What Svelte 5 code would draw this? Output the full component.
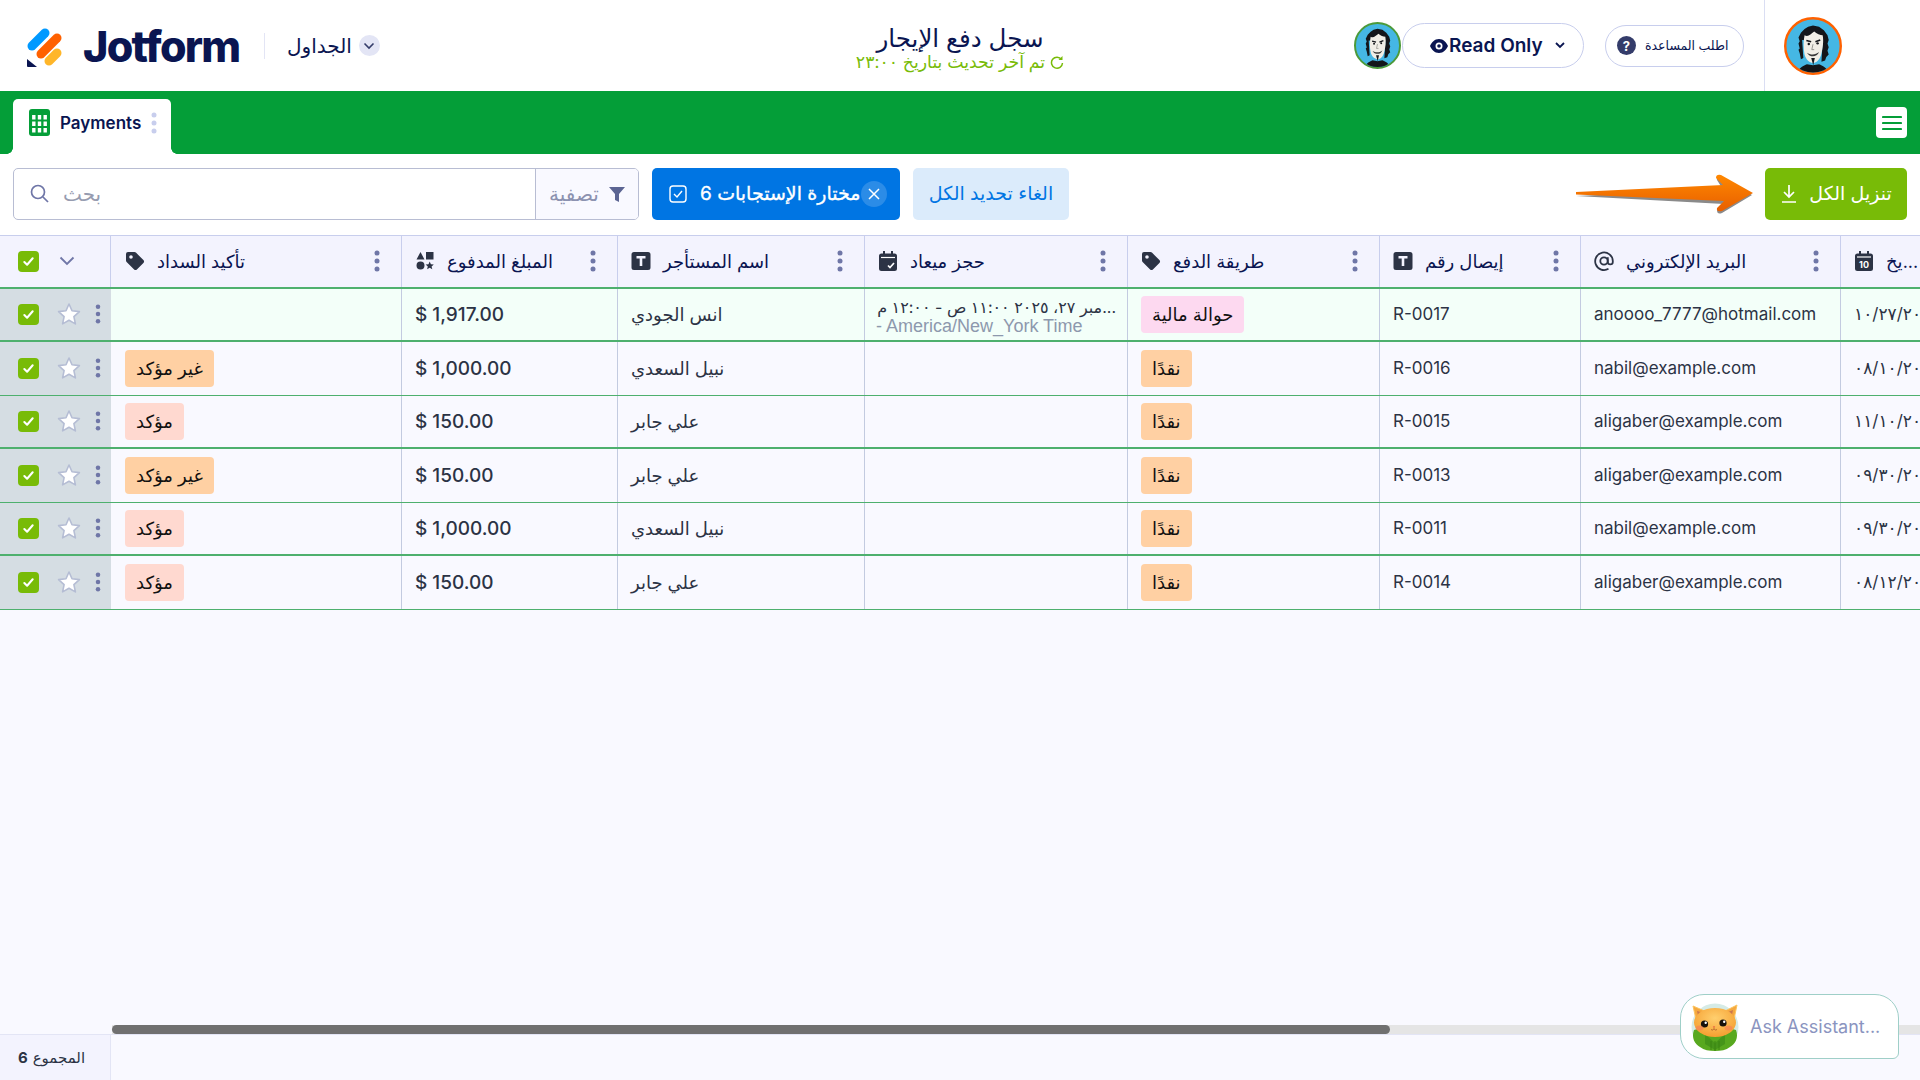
<script>
  const columns = [
    { label: "تأكيد السداد", icon: "tag" },
    { label: "المبلغ المدفوع", icon: "shapes" },
    { label: "اسم المستأجر", icon: "text" },
    { label: "حجز ميعاد", icon: "cal" },
    { label: "طريقة الدفع", icon: "tag" },
    { label: "إيصال رقم", icon: "text" },
    { label: "البريد الإلكتروني", icon: "at" },
    { label: "...يخ", icon: "date" }
  ]

  const rows = [
    { confirm: "", amount: "$ 1,917.00", name: "انس الجودي", slot: true, method: "حوالة مالية", receipt: "R-0017", email: "anoooo_7777@hotmail.com", date: "١٠/٢٧/٢٠٢٥" },
    { confirm: "غير مؤكد", amount: "$ 1,000.00", name: "نبيل السعدي", method: "نقدًا", receipt: "R-0016", email: "nabil@example.com", date: "٠٨/١٠/٢٠٢٥" },
    { confirm: "مؤكد", amount: "$ 150.00", name: "علي جابر", method: "نقدًا", receipt: "R-0015", email: "aligaber@example.com", date: "١١/١٠/٢٠٢٠" },
    { confirm: "غير مؤكد", amount: "$ 150.00", name: "علي جابر", method: "نقدًا", receipt: "R-0013", email: "aligaber@example.com", date: "٠٩/٣٠/٢٠٢٥" },
    { confirm: "مؤكد", amount: "$ 1,000.00", name: "نبيل السعدي", method: "نقدًا", receipt: "R-0011", email: "nabil@example.com", date: "٠٩/٣٠/٢٠٢٥" },
    { confirm: "مؤكد", amount: "$ 150.00", name: "علي جابر", method: "نقدًا", receipt: "R-0014", email: "aligaber@example.com", date: "٠٨/١٢/٢٠٢٥" }
  ]
</script>

{#snippet avatar(size, ring)}
  <svg class="avatar" width={size} height={size} viewBox="0 0 48 48">
    <circle cx="24" cy="24" r="23" fill="#45b7e4" stroke={ring} stroke-width="2" />
    <clipPath id="face-clip"><circle cx="24" cy="24" r="22" /></clipPath>
    <g clip-path="url(#face-clip)">
      <path d="M10 48c1-5 6-8 9-9l5 1 5-1c3 1 8 4 9 9z" fill="#14161a" />
      <path d="M13 30l-1-3 1-1-1-4 1-2-1-3 2-4 3-3 3-2 4-1 5 1 4 3 3 4 1 4-1 3 1 3-1 3 1 3-2 2-1 3-3 1 1-17-17-1 1 15-2 1z" fill="#14161a" />
      <path d="M17 15c3 2 5-1 8-3 2 2 5 3 7 3 1 5 0 11-1 15-1 5-4 8-7 8s-6-3-7-7c-1-5-1-11 0-16z" fill="#f1eee6" />
      <path d="M18.500 19.500l4 1M26 20.500l4-1.500" stroke="#14161a" stroke-width="1.300" fill="none" />
      <circle cx="20.500" cy="22.300" r="1" fill="#14161a" />
      <circle cx="27.800" cy="21.800" r="1" fill="#14161a" />
      <path d="M24 22.500l-1 4.500h2" fill="none" stroke="#8a8a84" stroke-width=".7" />
      <path d="M19 29.500c3 2 7 2 10-.5-1 2.500-3 3.500-5 3.500s-4-1-5-3z" fill="#3a3a3a" />
      <path d="M22.500 34h3l-1.300 6z" fill="#14161a" />
    </g>
  </svg>
{/snippet}

{#snippet check()}
  <span class="check">
    <svg width="13" height="13" viewBox="0 0 14 14"><path d="M2.500 7.500l3 3 6-7" fill="none" stroke="#fff" stroke-width="2.200" stroke-linecap="round" stroke-linejoin="round" /></svg>
  </span>
{/snippet}

{#snippet dots(color)}
  <svg class="dots" width="6" height="22" viewBox="0 0 6 22" fill={color}><circle cx="3" cy="3" r="2.500" /><circle cx="3" cy="11" r="2.500" /><circle cx="3" cy="19" r="2.500" /></svg>
{/snippet}

{#snippet colIcon(name)}
  <svg class="col-icon" width="20" height="20" viewBox="0 0 20 20" fill="#2c3345">
    {#if name === "tag"}
      <path d="M1 3a2 2 0 0 1 2-2h6.500a2 2 0 0 1 1.400.6l7.500 7.500a2 2 0 0 1 0 2.800l-6.500 6.500a2 2 0 0 1-2.800 0L1.600 10.900A2 2 0 0 1 1 9.500zM6 4.200a1.800 1.800 0 1 0 0 3.600 1.800 1.800 0 0 0 0-3.600z" fill-rule="evenodd" />
    {:else if name === "shapes"}
      <path d="M5.500 1l4 7.500h-8zM11 1h7.500v7.500H11zM5.500 10.500a4 4 0 1 1 0 8 4 4 0 0 1 0-8zM14.700 10.500l1.200 2.700 2.900.3-2.200 1.900.7 2.900-2.600-1.500-2.600 1.500.7-2.900-2.200-1.900 2.900-.3z" />
    {:else if name === "text"}
      <path d="M3 1h14a2.500 2.500 0 0 1 2.500 2.500v13A2.500 2.500 0 0 1 17 19H3a2.500 2.500 0 0 1-2.500-2.500v-13A2.500 2.500 0 0 1 3 1zM5.500 5v2.400h3.200V15h2.600V7.400h3.200V5z" fill-rule="evenodd" />
    {:else if name === "cal"}
      <path d="M5 0h2v2.500h6V0h2v2.500h1.500A2.500 2.500 0 0 1 19 5v12.500a2.500 2.500 0 0 1-2.500 2.500h-13A2.500 2.500 0 0 1 1 17.500V5a2.500 2.500 0 0 1 2.500-2.500H5z" />
      <path d="M3 6.500h14" stroke="#fff" stroke-width="1.200" />
      <path d="M10 14.500l2 2 4-4.500" fill="none" stroke="#fff" stroke-width="1.700" />
    {:else if name === "at"}
      <path d="M14.500 17.800A8.800 8.800 0 1 1 18.800 10v1c0 3.200-5 3.200-5 0V6.300" fill="none" stroke="#2c3345" stroke-width="1.800" />
      <circle cx="10" cy="10" r="3.700" fill="none" stroke="#2c3345" stroke-width="1.800" />
    {:else}
      <path d="M5 0h2v2.500h6V0h2v2.500h1.500A2.500 2.500 0 0 1 19 5v12.500a2.500 2.500 0 0 1-2.500 2.500h-13A2.500 2.500 0 0 1 1 17.500V5a2.500 2.500 0 0 1 2.500-2.500H5z" />
      <path d="M3 6h14" stroke="#fff" stroke-width="1.200" />
      <text x="10" y="16.500" font-size="9" font-weight="700" fill="#fff" text-anchor="middle" font-family="Inter, sans-serif">10</text>
    {/if}
  </svg>
{/snippet}

<div class="page">
  <header class="top">
    <div class="brand">
      <svg class="logo" width="38" height="40" viewBox="0 0 38 40">
        <path d="M7 19L20 6" stroke="#0099ff" stroke-width="9" stroke-linecap="round" />
        <path d="M16 27L32 11" stroke="#ff6100" stroke-width="9" stroke-linecap="round" />
        <path d="M24 34L32 26" stroke="#ffb629" stroke-width="9" stroke-linecap="round" />
        <path d="M2 32v7a1 1 0 0 0 1 1h9z" fill="#0a1551" />
      </svg>
      <span class="wordmark">Jotform</span>
      <span class="sep"></span>
      <span class="tables">الجداول</span>
      <span class="tables-caret">
        <svg width="12" height="8" viewBox="0 0 12 8"><path d="M1.500 1.500L6 6l4.500-4.500" fill="none" stroke="#343c6a" stroke-width="1.600" /></svg>
      </span>
    </div>

    <div class="title">
      <div class="name">سجل دفع الإيجار</div>
      <div class="updated" dir="rtl">
        <svg width="14" height="14" viewBox="0 0 14 14"><path d="M11.500 4.500A5.500 5.500 0 1 0 12.500 8" fill="none" stroke="#78bb07" stroke-width="1.500" /><path d="M12.500 1v4h-4z" fill="#78bb07" /></svg>
        <span>تم آخر تحديث بتاريخ ٢٣:٠٠</span>
      </div>
    </div>

    <div class="actions">
      {@render avatar(47, "#4c9a3a")}
      <div class="read-only">
        <svg width="18" height="14" viewBox="0 0 18 14"><path d="M9 0c4.500 0 7.500 3.500 9 7-1.500 3.500-4.500 7-9 7s-7.500-3.500-9-7c1.500-3.500 4.500-7 9-7zm0 3.500a3.500 3.500 0 1 0 0 7 3.500 3.500 0 0 0 0-7z" fill="#0a1551" fill-rule="evenodd" /><circle cx="9" cy="7" r="1.800" fill="#0a1551" /></svg>
        <span>Read Only</span>
        <svg class="ro-caret" width="10" height="7" viewBox="0 0 10 7"><path d="M1 1l4 4 4-4" fill="none" stroke="#0a1551" stroke-width="1.800" /></svg>
      </div>
      <div class="help">
        <span class="help-mark">?</span>
        <span>اطلب المساعدة</span>
      </div>
      <div class="me">{@render avatar(58, "#ff6100")}</div>
    </div>
  </header>

  <nav class="bar">
    <div class="tab">
      <svg width="21" height="27" viewBox="0 0 21 27"><rect width="21" height="27" rx="3" fill="#049e38" /><path d="M4.800 6v18M10.500 6v18M16.200 6v18" stroke="#fff" stroke-width="3.400" stroke-dasharray="4.500 2" /></svg>
      <span>Payments</span>
      {@render dots("#c8ceed")}
    </div>
    <button class="menu" aria-label="menu">
      <svg width="20" height="18" viewBox="0 0 20 18"><path d="M1 3h18M1 9h18M1 15h18" stroke="#049e38" stroke-width="2.200" stroke-linecap="round" /></svg>
    </button>
  </nav>

  <section class="tools">
    <div class="search">
      <svg class="lens" width="19" height="19" viewBox="0 0 19 19"><circle cx="8" cy="8" r="6.500" fill="none" stroke="#6f76a7" stroke-width="1.700" /><path d="M13 13l5 5" stroke="#6f76a7" stroke-width="1.700" /></svg>
      <span class="placeholder">بحث</span>
      <div class="filter">
        <span>تصفية</span>
        <svg width="16" height="16" viewBox="0 0 16 16"><path d="M0 1h16l-6 7v8l-4-2V8z" fill="#5c6593" /></svg>
      </div>
    </div>
    <div class="selected">
      <svg width="18" height="18" viewBox="0 0 18 18"><rect x="1" y="1" width="16" height="16" rx="3" fill="none" stroke="#fff" stroke-width="1.400" /><path d="M5 9l3 3 5-6" fill="none" stroke="#fff" stroke-width="1.400" /></svg>
      <span dir="rtl">مختارة الإستجابات 6</span>
      <span class="clear">
        <svg width="12" height="12" viewBox="0 0 12 12"><path d="M1 1l10 10M11 1L1 11" stroke="#fff" stroke-width="1.500" /></svg>
      </span>
    </div>
    <div class="deselect">الغاء تحديد الكل</div>
    <svg class="arrow" width="177" height="40" viewBox="0 0 177 40">
      <defs>
        <linearGradient id="arrow-fill" x1="0" y1="0" x2="0" y2="1"><stop offset="0" stop-color="#ff8800" /><stop offset="1" stop-color="#e85f00" /></linearGradient>
      </defs>
      <path d="M0 21L147 14.500 141 5Q140 1 145 2L176 20 146 38Q141 40 141 35L148 29z" fill="#8a8a8a" transform="translate(0 1)" />
      <path d="M0 18L147 11 140 4Q140 0 145 1L177 19 146 37Q140 38 141 34L148 27 0 20.500z" fill="url(#arrow-fill)" />
    </svg>
    <div class="download">
      <svg width="18" height="20" viewBox="0 0 18 20"><path d="M9 1v11M4 8l5 5 5-5M2 18h14" fill="none" stroke="#fff" stroke-width="1.700" /></svg>
      <span>تنزيل الكل</span>
    </div>
  </section>

  <section class="grid">
    <div class="row head">
      <div class="cell lead">
        {@render check()}
        <svg class="lead-caret" width="16" height="10" viewBox="0 0 16 10"><path d="M1.500 1.500L8 8l6.500-6.500" fill="none" stroke="#6f76a7" stroke-width="1.800" /></svg>
      </div>
      {#each columns as col}
        <div class="cell">
          {@render colIcon(col.icon)}
          <span class="col-label" dir="rtl">{col.label}</span>
          {@render dots("#6f76a7")}
        </div>
      {/each}
    </div>

    {#each rows as row, i}
      <div class="row" class:first={i === 0} class:thick={i % 2 === 0}>
        <div class="cell lead">
          {@render check()}
          <svg class="star" width="24" height="24" viewBox="0 0 24 24"><path d="M12 2l3 6.800 7.400.8-5.500 5 1.500 7.300L12 18.200l-6.400 3.700 1.500-7.300-5.500-5 7.400-.8z" fill="#fff" stroke="#b5bdd4" stroke-width="1.600" stroke-linejoin="round" /></svg>
          {@render dots("#6f76a7")}
        </div>
        <div class="cell">
          {#if row.confirm}
            <span class="pill" class:sure={row.confirm === "مؤكد"} class:unsure={row.confirm !== "مؤكد"}>{row.confirm}</span>
          {/if}
        </div>
        <div class="cell amount">{row.amount}</div>
        <div class="cell arabic">{row.name}</div>
        <div class="cell slot">
          {#if row.slot}
            <div class="slot-time" dir="rtl">...مبر ٢٧، ٢٠٢٥ ١١:٠٠ ص - ١٢:٠٠ م</div>
            <div class="slot-zone">- America/New_York Time</div>
          {/if}
        </div>
        <div class="cell">
          <span class="pill" class:wire={i === 0} class:unsure={i !== 0}>{row.method}</span>
        </div>
        <div class="cell">{row.receipt}</div>
        <div class="cell">{row.email}</div>
        <div class="cell">{row.date}</div>
      </div>
    {/each}
  </section>

  <div class="spare"></div>

  <div class="scroll"><div class="thumb"></div></div>
  <footer class="foot">
    <div class="total" dir="rtl">المجموع <b>6</b></div>
  </footer>

  <div class="assistant">
    <svg width="48" height="48" viewBox="0 0 48 48">
      <defs>
        <radialGradient id="cat-fur" cx="0.5" cy="0.35" r="0.65"><stop offset="0" stop-color="#ffcf6e" /><stop offset="1" stop-color="#f59f30" /></radialGradient>
      </defs>
      <circle cx="24" cy="24" r="23.500" fill="#d5ebe6" />
      <path d="M3 27c8-3 34-3 42 0 3 8-1 14-6 17-4 3-9 4-15 4S13 47 9 44C4 41 0 35 3 27z" fill="#58a81f" />
      <path d="M14 31l10 9 10-9v10l-10 6-10-6z" fill="#46951a" />
      <path d="M24 38v10M20 38v9M28 38v9" stroke="#35800f" stroke-width=".8" />
      <path d="M2 3l14 6-10 12zM46 2L32 9l10 12z" fill="#f5a83f" stroke="#fcc45f" stroke-width="1" />
      <path d="M6 8l7 2-5 7zM42 7l-7 3 5 7z" fill="#c9764f" />
      <ellipse cx="24" cy="19.500" rx="21" ry="14.500" fill="url(#cat-fur)" />
      <circle cx="13.500" cy="21" r="3.600" fill="#17110c" />
      <circle cx="32" cy="20" r="3.600" fill="#17110c" />
      <circle cx="14.700" cy="19.800" r="1.200" fill="#fff" />
      <circle cx="33.200" cy="18.800" r="1.200" fill="#fff" />
      <ellipse cx="8.500" cy="25" rx="4" ry="2.500" fill="#f47d5c" opacity=".6" />
      <ellipse cx="37.500" cy="25" rx="4" ry="2.500" fill="#f47d5c" opacity=".6" />
      <path d="M21.800 23.500h2.400L23 25z" fill="#e0483a" />
      <path d="M20 26.500c1.500 1 2.500 .5 3-1 .5 1.500 1.500 2 3 1" fill="none" stroke="#a65a2a" stroke-width=".8" />
    </svg>
    <span>Ask Assistant...</span>
  </div>
</div>

<style>
  :global(body) {
    margin: 0;
    background: #f9f9ff;
  }

  .page {
    position: relative;
    display: flex;
    flex-direction: column;
    height: 100vh;
    overflow: hidden;
    background: #f9f9ff;
    color: #0a1551;
    font-family: Inter, "DejaVu Sans", sans-serif;
  }

  .top {
    flex: none;
    display: grid;
    grid-template-columns: 1fr auto 1fr;
    align-items: center;
    height: 91px;
    background: #fff;
  }

  .brand {
    display: flex;
    align-items: center;
    padding-left: 25px;
  }

  .logo {
    margin-top: 2px;
  }

  .wordmark {
    width: 161px;
    margin-left: 20px;
    font-size: 43px;
    font-weight: 800;
    letter-spacing: -1.700px;
    color: #0a1551;
  }

  .sep {
    width: 1px;
    height: 26px;
    margin-left: 20px;
    background: #e3e5f5;
  }

  .tables {
    margin-left: 22px;
    font-size: 20px;
  }

  .tables-caret {
    display: grid;
    place-items: center;
    width: 21px;
    height: 21px;
    margin-left: 7px;
    border-radius: 50%;
    background: #e3e5f5;
  }

  .title {
    text-align: center;
    line-height: 1;
  }

  .name {
    font-size: 24.500px;
    line-height: 30px;
    margin-top: 2px;
    color: #0a1551;
  }

  .updated {
    display: flex;
    align-items: center;
    justify-content: center;
    gap: 5px;
    font-size: 17.300px;
    line-height: 18px;
    color: #78bb07;
  }

  .actions {
    display: flex;
    align-items: center;
    justify-content: flex-end;
    height: 100%;
  }

  .avatar {
    display: block;
    flex: none;
  }

  .read-only {
    display: flex;
    align-items: center;
    gap: 1px;
    width: 182px;
    height: 45px;
    box-sizing: border-box;
    margin-left: 1px;
    padding: 0 18px 0 27px;
    border: 1px solid #c8ceed;
    border-radius: 23px;
    font-size: 19px;
    font-weight: 600;
  }

  .ro-caret {
    margin-left: auto;
  }

  .help {
    display: flex;
    align-items: center;
    gap: 9px;
    width: 139px;
    height: 42px;
    box-sizing: border-box;
    margin-left: 21px;
    padding-left: 11px;
    border: 1px solid #c8ceed;
    border-radius: 21px;
    font-size: 12.500px;
    white-space: nowrap;
  }

  .help-mark {
    display: grid;
    place-items: center;
    width: 19px;
    height: 19px;
    border-radius: 50%;
    background: #343c6a;
    color: #fff;
    font-size: 13px;
    font-weight: 700;
  }

  .me {
    display: flex;
    align-items: center;
    align-self: stretch;
    margin-left: 20px;
    padding: 0 78px 0 19px;
    border-left: 1px solid #dadef3;
  }

  .bar {
    flex: none;
    display: flex;
    align-items: flex-end;
    justify-content: space-between;
    height: 63px;
    padding: 0 13px;
    background: #049e38;
  }

  .tab {
    position: relative;
    display: flex;
    align-items: center;
    gap: 10px;
    width: 158px;
    height: 55px;
    box-sizing: border-box;
    padding: 0 0 8px 16px;
    border-radius: 5px 5px 0 0;
    background: #fff;
    font-size: 17px;
    font-weight: 600;
  }

  .tab::before,
  .tab::after {
    content: "";
    position: absolute;
    bottom: 0;
    width: 6px;
    height: 6px;
  }

  .tab::before {
    left: -6px;
    background: radial-gradient(circle at 0 0, #049e38 5.500px, #fff 6px);
  }

  .tab::after {
    right: -6px;
    background: radial-gradient(circle at 100% 0, #049e38 5.500px, #fff 6px);
  }

  .tab .dots {
    margin-left: 0;
  }

  .menu {
    align-self: center;
    display: grid;
    place-items: center;
    width: 31px;
    height: 31px;
    padding: 0;
    border: 0;
    border-radius: 4px;
    background: #fff;
  }

  .tools {
    flex: none;
    display: flex;
    align-items: center;
    height: 81px;
    box-sizing: border-box;
    padding: 0 13px 2px;
    background: #fff;
    font-size: 19px;
  }

  .search {
    display: flex;
    align-items: center;
    width: 626px;
    height: 52px;
    box-sizing: border-box;
    border: 1px solid #b8bdd3;
    border-radius: 5px;
    overflow: hidden;
  }

  .lens {
    margin-left: 16px;
  }

  .placeholder {
    margin-left: 14px;
    font-size: 20px;
    color: #979cb0;
  }

  .filter {
    display: flex;
    align-items: center;
    gap: 10px;
    align-self: stretch;
    margin-left: auto;
    width: 103px;
    box-sizing: border-box;
    padding-left: 13px;
    border-left: 1px solid #b8bdd3;
    background: #f9f9ff;
    font-size: 20px;
    color: #8c92b0;
  }

  .selected {
    display: flex;
    align-items: center;
    width: 248px;
    height: 52px;
    box-sizing: border-box;
    margin-left: 13px;
    padding: 0 13px 0 17px;
    border-radius: 5px;
    background: #0075e3;
    color: #fff;
    white-space: nowrap;
  }

  .selected svg:first-child {
    flex: none;
  }

  .selected span[dir] {
    margin-left: 13px;
    font-size: 19px;
    -webkit-text-stroke: 0.35px #fff;
  }

  .clear {
    display: grid;
    place-items: center;
    flex: none;
    width: 26px;
    height: 26px;
    margin-left: auto;
    border-radius: 50%;
    background: rgba(255, 255, 255, 0.17);
  }

  .deselect {
    display: grid;
    place-items: center;
    width: 156px;
    height: 52px;
    margin-left: 13px;
    border-radius: 5px;
    background: #dbebfb;
    color: #0075e3;
    white-space: nowrap;
  }

  .arrow {
    flex: none;
    margin-left: auto;
  }

  .download {
    display: flex;
    align-items: center;
    justify-content: center;
    gap: 11px;
    width: 142px;
    height: 52px;
    margin-left: 12px;
    border-radius: 5px;
    background: #78bb07;
    color: #fff;
    white-space: nowrap;
  }

  .grid {
    flex: none;
    width: 100%;
    overflow: hidden;
    font-size: 17px;
    color: #2c3345;
  }

  .row {
    display: grid;
    grid-template-columns: 111px 290px 216px 247px 263px 252px 201px 260px 220px;
    height: 53.500px;
    box-sizing: border-box;
    border-bottom: 1px solid #4eb06e;
    background: #f9f9ff;
  }

  .row.thick {
    border-bottom-width: 2px;
  }

  .row.first {
    background: #f3fff9;
  }

  .row.head {
    height: 53.500px;
    border-top: 1px solid #c8ceed;
    border-bottom: 2px solid #4eb06e;
    background: #f3f3fe;
  }

  .cell {
    display: flex;
    align-items: center;
    min-width: 0;
    padding: 0 13px;
    border-left: 1px solid #c3cbe0;
    white-space: nowrap;
    overflow: hidden;
  }

  .cell.arabic {
    font-size: 18px;
  }

  .row .cell:first-child {
    border-left: 0;
  }

  .cell.lead {
    padding: 0 0 0 18px;
    background: #d5dde3;
  }

  .head .cell.lead {
    background: #f3f3fe;
    border-right: 1px solid #c8ceed;
  }

  .head .cell {
    border-left-color: #c8ceed;
  }

  .row .cell.lead + .cell {
    border-left: 0;
    padding-left: 14px;
  }

  .check {
    display: grid;
    place-items: center;
    flex: none;
    width: 21px;
    height: 21px;
    border-radius: 4px;
    background: #78bb07;
  }

  .lead-caret {
    margin-left: 20px;
  }

  .star {
    flex: none;
    margin-left: 18px;
  }

  .lead .dots {
    margin-left: 14px;
    height: 20px;
  }

  .dots {
    flex: none;
    margin-left: auto;
  }

  .head .cell > .dots {
    margin-right: 8px;
  }

  .col-icon {
    flex: none;
  }

  .col-label {
    margin-left: 12px;
    font-size: 18px;
    color: #0a1551;
  }

  .amount {
    font-size: 19px;
    font-weight: 500;
  }

  .pill {
    display: flex;
    align-items: center;
    height: 37px;
    padding: 0 11px;
    border-radius: 4px;
    font-size: 18px;
    color: #111;
  }

  .pill.unsure {
    background: #ffd0a3;
  }

  .pill.sure {
    background: #ffd9d0;
  }

  .pill.wire {
    background: #fdd9f0;
  }

  .cell.slot {
    display: block;
    padding: 8px 11px 0;
  }

  .slot-time {
    font-size: 16px;
    line-height: 21px;
  }

  .slot-zone {
    font-family: "Liberation Sans", sans-serif;
    font-size: 18px;
    line-height: 17px;
    color: #8d98ad;
  }

  .spare {
    flex: 1;
  }

  .scroll {
    flex: none;
    height: 9px;
    margin-left: 112px;
    background: #e5e5e5;
  }

  .thumb {
    width: 1278px;
    height: 100%;
    border-radius: 5px;
    background: #707070;
  }

  .foot {
    flex: none;
    height: 45px;
    border-top: 1px solid #e3e5f5;
  }

  .total {
    display: flex;
    align-items: center;
    justify-content: center;
    gap: 5px;
    width: 111px;
    height: 100%;
    box-sizing: border-box;
    padding-right: 7px;
    border-right: 1px solid #e3e5f5;
    background: #f3f3fe;
    font-size: 15px;
    color: #2c3345;
  }

  .assistant {
    position: absolute;
    left: 1680px;
    top: 994px;
    display: flex;
    align-items: center;
    gap: 11px;
    width: 219px;
    height: 65px;
    box-sizing: border-box;
    padding-left: 10px;
    border: 1px solid #9fcfc8;
    border-radius: 24px 24px 6px 24px;
    background: #fff;
    font-size: 18px;
    color: #8a94c0;
  }
</style>
